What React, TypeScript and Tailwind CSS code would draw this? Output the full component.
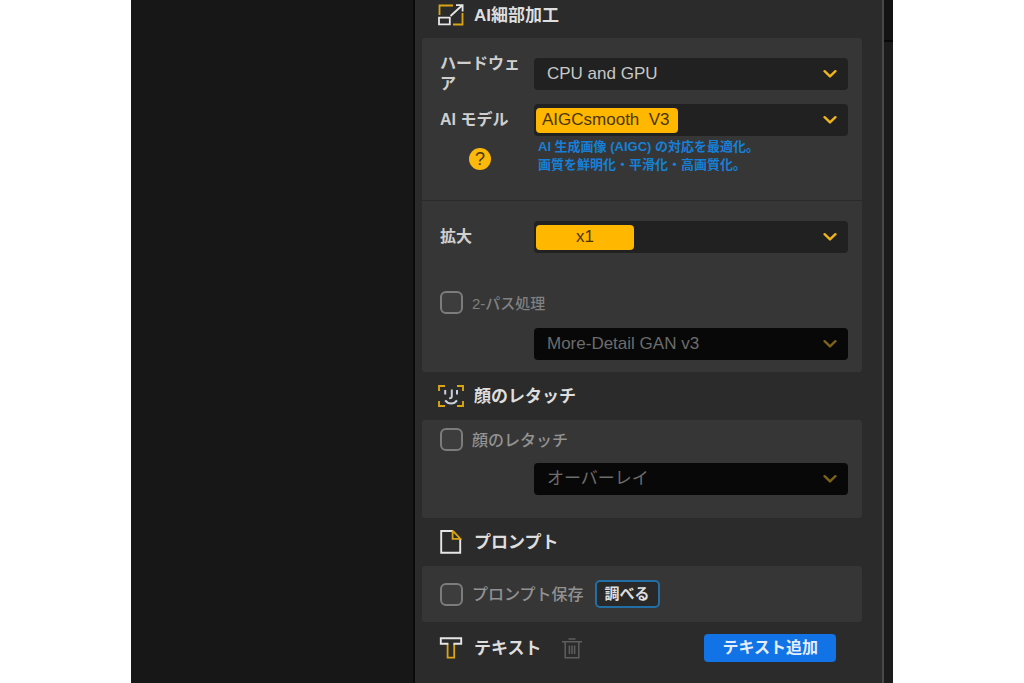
import type { ReactNode } from 'react';

const Chevron = ({ dim = false }: { dim?: boolean }) => (
  <svg
    width="14"
    height="10"
    viewBox="0 0 14 10"
    fill="none"
    aria-hidden="true"
    className={dim ? 'text-[#7d6219]' : 'text-[#f0b41c]'}
  >
    <path d="M1.6 2.2 7 7.4l5.4-5.2" stroke="currentColor" strokeWidth="2.4" strokeLinecap="round" strokeLinejoin="round" />
  </svg>
);

const ResizeIcon = () => (
  <svg width="26" height="22" viewBox="0 0 26 22" fill="none" aria-hidden="true">
    <path d="M1.5 11V1.5H15M24.5 9v11.5H15" stroke="#d9a514" strokeWidth="1.8" />
    <path d="M1 13.6h10.8v6.8H1z" stroke="#e6e6e6" strokeWidth="1.8" />
    <path d="M12.5 12 24 1.5M18 1.2h6.6v6.4" stroke="#e6e6e6" strokeWidth="1.8" />
  </svg>
);

const FaceIcon = () => (
  <svg width="26" height="22" viewBox="0 0 26 22" fill="none" aria-hidden="true">
    <path d="M1 6V1h6M19 1h6v5M1 16v5h6M19 21h6v-5" stroke="#d9a514" strokeWidth="1.9" />
    <path d="M7.2 5v4.5M19 5v4.5M13.8 4.5v7c0 1.2-.9 1.8-2.6 1.6M7.2 15.4c3 4.2 8.8 4.2 11.8 0" stroke="#c9cfdb" strokeWidth="2" />
  </svg>
);

const FileIcon = () => (
  <svg width="24" height="24" viewBox="0 0 24 24" fill="none" aria-hidden="true">
    <path d="M15 1H3.2v21.8h19V9" stroke="#e6e6e6" strokeWidth="1.9" />
    <path d="M14.6 1.4v7.4h7.8L15.4 1.4z" stroke="#d9a514" strokeWidth="1.8" />
  </svg>
);

const TextIcon = () => (
  <svg width="25" height="22" viewBox="0 0 25 22" fill="none" aria-hidden="true">
    <path d="M9.6 7v13.6h6.6V7" stroke="#d9a514" strokeWidth="1.8" />
    <path d="M10.4 6.8H2.8V1.2h20.4v5.6h-7.8" stroke="#e6e6e6" strokeWidth="1.9" />
  </svg>
);

const TrashIcon = () => (
  <svg width="20" height="21" viewBox="0 0 20 21" fill="none" stroke="#5e5e5e" strokeWidth="1.5" aria-hidden="true">
    <path d="M0 3.8h20M6.5 1h7M3.2 4v15.8h13.6V4M7.4 7.5v8.5M10 7.5v8.5M12.6 7.5v8.5" />
  </svg>
);

const SectionTitle = ({ icon, children }: { icon: ReactNode; children: ReactNode }) => (
  <div className="flex items-center">
    <span className="flex w-9 shrink-0 items-center">{icon}</span>
    <h2 className="pt-[2px] text-[17px] font-bold leading-6 text-[#dedede]">{children}</h2>
  </div>
);

const Card = ({ children }: { children: ReactNode }) => (
  <section className="rounded-[3px] bg-[#363636]">{children}</section>
);

type SelectProps = { id?: string; value: string; disabled?: boolean; pill?: string; label?: string };

const SelectBox = ({ id, value, disabled = false, pill, label }: SelectProps) => {
  const look = pill
    ? `h-[25px] rounded-[4px] bg-[#ffb700] text-[#4a3600] ${pill}`
    : `h-full flex-1 pl-[11px] ${disabled ? 'text-[#6c6c6c]' : 'text-[#c8c8c8]'}`;
  return (
    <div
      className={`flex h-8 min-w-0 flex-1 items-center justify-between rounded-[4px] pl-[2px] pr-[11px] ${
        disabled ? 'bg-[#080808]' : 'bg-[#212121]'
      }`}
    >
      <select
        id={id}
        aria-label={label}
        disabled={disabled}
        className={`min-w-0 appearance-none text-[17px] leading-6 opacity-100 outline-none ${look}`}
      >
        <option>{value}</option>
      </select>
      <Chevron dim={disabled} />
    </div>
  );
};

const CheckRow = ({ id, text, small = false }: { id: string; text: string; small?: boolean }) => (
  <div className="flex items-center gap-[9px]">
    <input
      id={id}
      type="checkbox"
      className="size-[23px] appearance-none rounded-[6px] border-2 border-[#7c7c7c] bg-[#3d3d3d]"
    />
    <label
      htmlFor={id}
      className={`pt-[2px] font-medium leading-5 ${small ? 'text-[15px] text-[#808080]' : 'text-[16px] text-[#929292]'}`}
    >
      {text}
    </label>
  </div>
);

const labelClass = 'w-20 shrink-0 text-[16px] font-bold leading-5 text-[#cfcfcf]';

const App = () => (
  <div className="min-h-screen bg-white font-['Liberation_Sans','Noto_Sans_CJK_JP',sans-serif]">
    <div className="mx-auto flex min-h-screen max-w-[762px] bg-[#171717]">
      <div className="flex-1 border-r-2 border-[#0a0a0a]" />

      <aside lang="ja" className="w-[469px] border-r-2 border-[#484848] bg-[#2b2b2b] pl-[7px] pr-5">
        <div className="flex h-[38px] items-center px-4 pb-2">
          <SectionTitle icon={<ResizeIcon />}>AI細部加工</SectionTitle>
        </div>

        <Card>
          <div className="border-b border-[#2a2a2a] pb-[26px] pl-[18px] pr-[14px] pt-4">
            <div className="flex h-10 items-center gap-[14px]">
              <label htmlFor="hardware" className={labelClass}>
                ハードウェア
              </label>
              <SelectBox id="hardware" value="CPU and GPU" />
            </div>
            <div className="mt-[10px] flex items-center gap-[14px]">
              <label htmlFor="model" className={labelClass}>
                AI モデル
              </label>
              <SelectBox id="model" value={'AIGCsmooth\u00a0 V3'} pill="w-[142px] pl-[6px]" />
            </div>
            <div className="mt-[2px] flex items-end gap-[14px]">
              <div className="flex w-20 justify-center pb-1">
                <button
                  type="button"
                  className="size-[22px] rounded-full bg-[#fcb80b] text-[18px] leading-[22px] text-[#4a3808]"
                >
                  ?
                </button>
              </div>
              <p className="flex-1 pl-1 text-[13px] font-bold leading-[18px] text-[#1680d6]">
                AI 生成画像 (AIGC) の対応を最適化。
                <br />
                画質を鮮明化・平滑化・高画質化。
              </p>
            </div>
          </div>

          <div className="pb-3 pl-[18px] pr-[14px] pt-5">
            <div className="flex items-center gap-[14px]">
              <label htmlFor="scale" className={labelClass}>
                拡大
              </label>
              <SelectBox id="scale" value="x1" pill="w-[98px] text-center" />
            </div>
            <div className="mt-[38px]">
              <CheckRow id="two-pass" text="2-パス処理" small />
            </div>
            <div className="mt-[14px] flex pl-[94px]">
              <SelectBox label="2-パス処理" value="More-Detail GAN v3" disabled />
            </div>
          </div>
        </Card>

        <div className="flex h-12 items-center px-4">
          <SectionTitle icon={<FaceIcon />}>顔のレタッチ</SectionTitle>
        </div>

        <Card>
          <div className="pb-[23px] pl-[18px] pr-[14px] pt-2">
            <CheckRow id="face" text="顔のレタッチ" />
            <div className="mt-3 flex pl-[94px]">
              <SelectBox label="顔のレタッチ" value="オーバーレイ" disabled />
            </div>
          </div>
        </Card>

        <div className="flex h-12 items-center px-4">
          <SectionTitle icon={<FileIcon />}>プロンプト</SectionTitle>
        </div>

        <Card>
          <div className="flex h-14 items-center gap-[11px] px-[18px]">
            <CheckRow id="prompt" text="プロンプト保存" />
            <button
              type="button"
              className="h-7 rounded-[5px] border-2 border-[#246ea6] bg-[#292929] px-2 text-[15px] font-bold leading-5 text-[#dedede]"
            >
              調べる
            </button>
          </div>
        </Card>

        <div className="flex h-[52px] items-center px-4">
          <SectionTitle icon={<TextIcon />}>テキスト</SectionTitle>
          <button type="button" aria-label="削除" className="ml-5">
            <TrashIcon />
          </button>
          <button
            type="button"
            className="ml-auto mr-[10px] h-7 rounded-[4px] bg-[#1273e6] px-[18px] text-[16px] font-bold leading-6 text-[#e4eefb]"
          >
            テキスト追加
          </button>
        </div>
      </aside>

      <div className="w-[9px] bg-[#1b1b1b]">
        <div className="h-[42px] border-b-2 border-[#080808] bg-[#131313]" />
      </div>
    </div>
  </div>
);

export default App;
